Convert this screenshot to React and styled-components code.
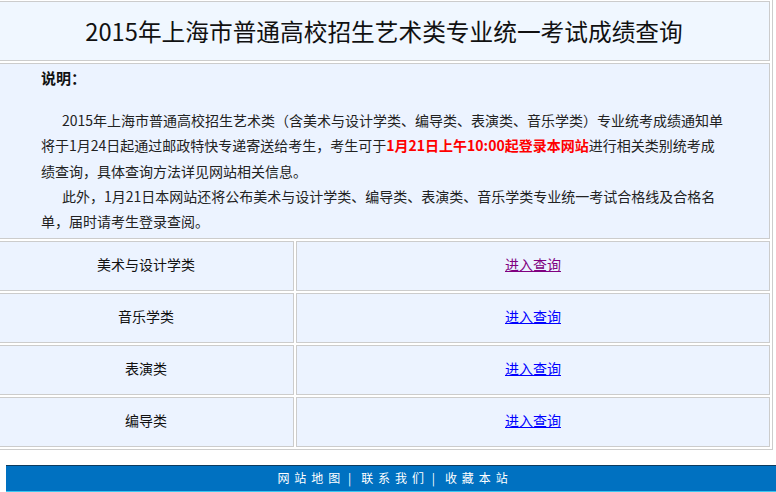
import { Fragment } from 'react';
import styled, { createGlobalStyle } from 'styled-components';


const GlobalStyle = createGlobalStyle`
    html, body {
        margin: 0;
        padding: 0;
        background: #FFFFFF;
        overflow: hidden;
    }
    body {
        font-family: "Noto Sans CJK SC", "Noto Sans", sans-serif;
        font-size: 14px;
        color: #000000;
    }
`;

const Page = styled.div`
    width: 776px;
    height: 492px;
    overflow: hidden;
`;

const Table = styled.div`
    box-sizing: border-box;
    width: 778px;
    margin: -2px 0 0 -5px;
    padding: 2px;
    border: 1px solid #CCCCCC;
    display: grid;
    grid-template-columns: 296px 1fr;
    row-gap: 2px;
    column-gap: 2px;
`;

const Cell = styled.div`
    box-sizing: border-box;
    border: 1px solid #CCCCCC;
    background-color: ${({ $light }) => ($light ? '#F0F7FF' : '#ECF3FF')};
    grid-column: ${({ $span }) => ($span ? '1 / -1' : 'auto')};
`;

const TitleCell = styled(Cell)`
    height: 60px;
    display: flex;
    align-items: center;
    justify-content: center;
    padding-bottom: 1px;
    font-size: 23.7px;
    color: #111111;
`;

const NoteCell = styled(Cell)`
    height: 176px;
    padding: 1px 30px 4px 42px;
`;

const NoteHeading = styled.div`
    font-size: 15px;
    font-weight: bold;
    line-height: 25px;
    margin-bottom: 18px;
    color: #111111;
`;

const Paragraph = styled.p`
    margin: 0;
    line-height: 25.25px;
    text-indent: 21px;
    white-space: nowrap;
    color: #222222;
`;

const Highlight = styled.span`
    color: #FF0000;
    font-weight: bold;
`;

const RowCell = styled(Cell)`
    height: 50px;
    display: flex;
    align-items: center;
    justify-content: center;
    padding-bottom: 4px;
    line-height: 18px;
    color: #111111;
`;

const QueryLink = styled.a`
    color: ${({ $visited }) => ($visited ? '#800080' : '#0000FF')};
    text-decoration: underline;
    cursor: pointer;
`;

const Footer = styled.div`
    box-sizing: border-box;
    width: 778px;
    height: 28px;
    margin: 15px 0 0 6px;
    padding-bottom: 3px;
    border-top: 1px solid #0D3B5E;
    border-bottom: 2px solid #3AC8F0;
    background-color: #0071C1;
    display: flex;
    align-items: center;
    justify-content: center;
    font-size: 12px;
    color: #FFFFFF;
`;

const FooterItem = styled.span`
    letter-spacing: 4.9px;
`;

const Divider = styled.span`
    margin: 0 5px 0 3px;
`;


const categories = [
    { name: '美术与设计学类', visited: true },
    { name: '音乐学类', visited: false },
    { name: '表演类', visited: false },
    { name: '编导类', visited: false },
];

const footerLinks = ['网站地图', '联系我们', '收藏本站'];


function App() {
    return (
        <Page>
            <GlobalStyle />
            <Table>
                <TitleCell $span $light>2015年上海市普通高校招生艺术类专业统一考试成绩查询</TitleCell>
                <NoteCell $span>
                    <NoteHeading>说明：</NoteHeading>
                    <Paragraph>
                        2015年上海市普通高校招生艺术类（含美术与设计学类、编导类、表演类、音乐学类）专业统考成绩通知单<br />
                        将于1月24日起通过邮政特快专递寄送给考生，考生可于<Highlight>1月21日上午10:00起登录本网站</Highlight>进行相关类别统考成<br />
                        绩查询，具体查询方法详见网站相关信息。
                    </Paragraph>
                    <Paragraph>
                        此外，1月21日本网站还将公布美术与设计学类、编导类、表演类、音乐学类专业统一考试合格线及合格名<br />
                        单，届时请考生登录查阅。
                    </Paragraph>
                </NoteCell>
                {categories.map((item) => (
                    <Fragment key={item.name}>
                        <RowCell>{item.name}</RowCell>
                        <RowCell>
                            <QueryLink $visited={item.visited}>进入查询</QueryLink>
                        </RowCell>
                    </Fragment>
                ))}
            </Table>
            <Footer>
                {footerLinks.map((label, index) => (
                    <FooterItem key={label}>
                        {index > 0 && <Divider>|</Divider>}
                        {label}
                    </FooterItem>
                ))}
            </Footer>
        </Page>
    );
}


export default App;
